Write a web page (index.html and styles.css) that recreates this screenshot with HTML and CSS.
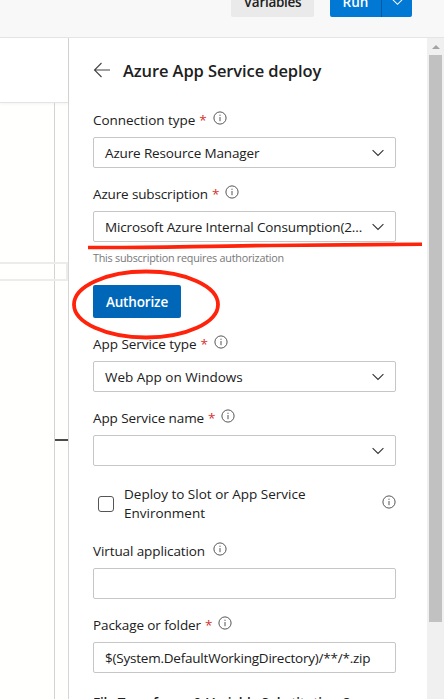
FILE: index.html
```html
<!DOCTYPE html>
<html lang="en">
<head>
<meta charset="utf-8">
<title>Azure App Service deploy</title>
<link rel="stylesheet" href="styles.css">
</head>
<body>
<svg class="defs" width="0" height="0">
  <symbol id="info" viewBox="0 0 14 14"><circle cx="7" cy="7" r="6.1" fill="none" stroke="currentColor" stroke-width="1"/><path d="M7 6v4.2M7 3.7v1.2" stroke="currentColor" stroke-width="1" fill="none"/></symbol>
  <symbol id="chev" viewBox="0 0 12 8"><path d="M.6 1.2 6 6.5 11.4 1.2" fill="none" stroke="currentColor" stroke-width="1.1"/></symbol>
</svg>
<div class="app">
  <header class="topbar">
    <button class="btn vars">Variables</button>
    <div class="split"><button class="btn run">Run</button><button class="btn more"><svg width="11" height="8"><use href="#chev"/></svg></button></div>
  </header>
  <main class="body">
    <section class="canvas">
      <div class="canvas-head"></div>
      <div class="canvas-main"><div class="lane"></div><div class="track"></div><div class="stage"></div><div class="link"></div></div>
    </section>
    <section class="panel">
      <div class="title"><svg width="17" height="16" viewBox="0 0 17 16"><path d="M8.500 1 1.500 8l7 7M1.500 8H17" fill="none" stroke="#444" stroke-width="1.1"/></svg><h1>Azure App Service deploy</h1></div>
      <div class="field"><div class="label"><span class="t1">Connection type</span><b>*</b><svg class="info"><use href="#info"/></svg></div>
        <div class="box"><span class="v1">Azure Resource Manager</span><svg class="chev"><use href="#chev"/></svg></div></div>
      <div class="field"><div class="label"><span class="t2">Azure subscription</span><b>*</b><svg class="info"><use href="#info"/></svg></div>
        <div class="box"><span class="v2">Microsoft Azure Internal Consumption(2...</span><svg class="chev"><use href="#chev"/></svg></div></div>
      <p class="help">This subscription requires authorization</p>
      <button class="btn auth">Authorize</button>
      <div class="field"><div class="label"><span class="t3">App Service type</span><b>*</b><svg class="info"><use href="#info"/></svg></div>
        <div class="box"><span class="v3">Web App on Windows</span><svg class="chev"><use href="#chev"/></svg></div></div>
      <div class="field"><div class="label"><span class="t4">App Service name</span><b>*</b><svg class="info"><use href="#info"/></svg></div>
        <div class="box"><span></span><svg class="chev"><use href="#chev"/></svg></div></div>
      <div class="check"><i></i><span>Deploy to Slot or App Service<br>Environment</span><svg class="info"><use href="#info"/></svg></div>
      <div class="field"><div class="label"><span class="t5">Virtual application</span><svg class="info"><use href="#info"/></svg></div>
        <div class="box"></div></div>
      <div class="field"><div class="label"><span class="t6">Package or folder</span><b>*</b><svg class="info"><use href="#info"/></svg></div>
        <div class="box"><span class="v6">$(System.DefaultWorkingDirectory)/**/*.zip</span></div></div>
      <div class="group"><h2>File Transforms &amp; Variable Substitution O...</h2><svg class="chev"><use href="#chev"/></svg></div>
    </section>
    <div class="scroll"><svg width="8" height="4"><path d="M0 4 4 0l4 4z" fill="#a3a3a3"/></svg><div class="thumb"></div></div>
  </main>
  <svg class="marks" width="444" height="699" fill="none" stroke="#fe230a"><path d="M88 247.500C150 248 200 246 270 245.500S370 244.500 422 244.300" stroke-width="3.600"/><ellipse cx="146" cy="304.500" rx="72" ry="33" stroke-width="3.800"/></svg>
</div>
</body>
</html>
```
FILE: styles.css
```css
* { box-sizing: border-box; }
body { margin: 0; font: 13.500px/20px "Open Sans", "Noto Sans", sans-serif; color: #202020; }
.defs { position: absolute; }
.app { position: relative; width: 444px; height: 699px; overflow: hidden; display: flex; flex-direction: column; background: #fff; }
.topbar { height: 38px; flex: none; background: #f8f8f8; border-bottom: 1px solid #e5e5e5; display: flex; justify-content: flex-end; align-items: flex-start; gap: 16px; padding-right: 32px; overflow: hidden; }
.btn { border: 0; border-radius: 2px; font: 600 13.500px/20px "Open Sans", sans-serif; padding: 0; height: 32px; margin-top: -15px; color: #fff; white-space: nowrap; }
.vars { width: 83px; background: #eaeaea; color: #202020; letter-spacing: -.3px; }
.split { display: flex; }
.run { width: 52px; background: #0078d4; border-right: 1px solid #005ba1; border-radius: 2px 0 0 2px; }
.more { width: 30px; background: #0078d4; border-radius: 0 2px 2px 0; }
.vars, .run { padding-top: 1px; }
.body { flex: 1; min-height: 0; display: flex; }
.canvas { width: 69px; flex: none; border-right: 1px solid #d6d6d6; background: #fffffd; display: flex; flex-direction: column; }
.canvas-head { height: 65px; background: #fff; border-bottom: 1px solid #e4e4e4; box-shadow: 0 1px 3px #0000000d; }
.canvas-main { flex: 1; display: grid; grid-template-columns: 54px 14px; grid-template-rows: 159px 19px 158px 2px 1fr; }
.lane { grid-area: 1 / 1 / 6 / 2; }
.track { grid-area: 1 / 2 / 6 / 3; border-left: 1px solid #d3d3d3; }
.stage { grid-area: 2 / 1 / 3 / 3; border: 2px solid #ececec; border-left: 0; }
.link { grid-area: 4 / 2 / 5 / 3; margin-left: 1px; background: #4b4b4b; }
.panel { width: 358px; padding: 23px 31px 0 24px; overflow: hidden; display: flex; flex-direction: column; }
.panel > * { flex: none; }
.title { display: flex; align-items: center; height: 20px; gap: 13px; margin-bottom: 29px; }
.title svg { position: relative; top: -1px; }
h1 { margin: 0; font-size: 16.500px; font-weight: 600; letter-spacing: -.1px; white-space: nowrap; }
.t1, .t3 { letter-spacing: -.04px; }
.t2, .v1, .v2 { letter-spacing: -.14px; }
.t4, .t5, .t6 { letter-spacing: -.1px; }
.v6 { letter-spacing: -.22px; }
.field { margin-bottom: 16px; }
.label { display: flex; height: 20px; margin-bottom: 7px; white-space: nowrap; }
.label b { color: #d6312b; font-weight: 400; margin-left: 4px; }
.info { width: 14px; height: 14px; color: #555; flex: none; margin: 1px 0 0 8px; }
.label b + .info { margin-left: 6px; }
.box { height: 31px; border: 1px solid #c6c6c6; border-radius: 2px; padding: 0 11px; display: flex; justify-content: space-between; align-items: center; white-space: nowrap; }
.chev { width: 12px; height: 8px; color: #333; flex: none; }
.help { margin: -10px 0 17px; font-size: 10.800px; letter-spacing: -.24px; color: #777; height: 20px; white-space: nowrap; }
.auth { width: 88px; height: 33px; margin: 0 0 16px; background: #0067b8; letter-spacing: -.15px; }
.check { display: flex; align-items: center; height: 38px; margin: 3px 0 18px; line-height: 19px; }
.check i { width: 16px; height: 16px; border: 1px solid #555; border-radius: 3px; margin: 0 10px 0 5px; }
.check .info { margin-left: auto; margin-top: -4px; }
.group { display: flex; justify-content: space-between; align-items: center; margin-top: 4px; }
h2 { margin: 0; font-size: 13.500px; line-height: 20px; font-weight: 600; letter-spacing: -.25px; white-space: nowrap; }
.group .chev { margin-right: 1px; }
.scroll { width: 17px; flex: none; background: #f0f0f0; display: flex; flex-direction: column; align-items: center; padding-top: 7px; }
.thumb { width: 13px; height: 567px; margin-top: 6px; background: #c1c1c1; }
.marks { position: absolute; left: 0; top: 0; pointer-events: none; }
```
